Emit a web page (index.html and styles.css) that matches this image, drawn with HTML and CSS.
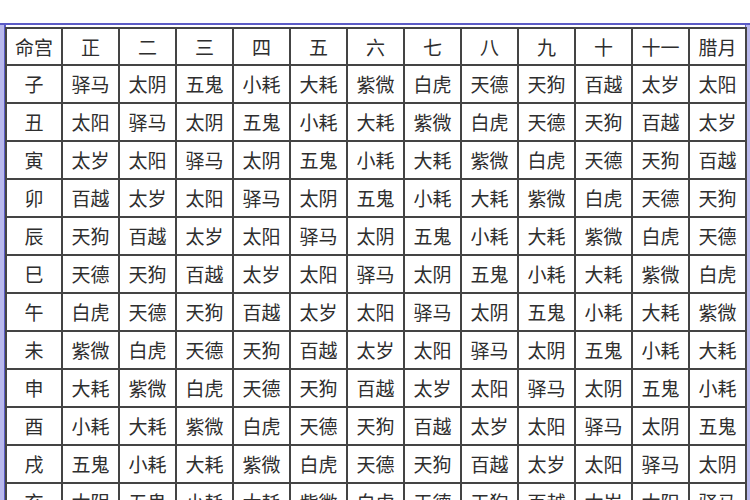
FILE: index.html
```html
<!DOCTYPE html>
<html lang="zh">
<head>
<meta charset="utf-8">
<title>命宫表</title>
<link rel="stylesheet" href="styles.css">
</head>
<body>
<div class="frame">
  <div class="inner">
    <table class="grid">
      <colgroup>
        <col class="c-first"><col><col><col><col><col><col><col><col><col><col><col><col>
      </colgroup>
      <tr class="head"><td>命宫</td><td>正</td><td>二</td><td>三</td><td>四</td><td>五</td><td>六</td><td>七</td><td>八</td><td>九</td><td>十</td><td>十一</td><td>腊月</td></tr>
      <tr><td>子</td><td>驿马</td><td>太阴</td><td>五鬼</td><td>小耗</td><td>大耗</td><td>紫微</td><td>白虎</td><td>天德</td><td>天狗</td><td>百越</td><td>太岁</td><td>太阳</td></tr>
      <tr><td>丑</td><td>太阳</td><td>驿马</td><td>太阴</td><td>五鬼</td><td>小耗</td><td>大耗</td><td>紫微</td><td>白虎</td><td>天德</td><td>天狗</td><td>百越</td><td>太岁</td></tr>
      <tr><td>寅</td><td>太岁</td><td>太阳</td><td>驿马</td><td>太阴</td><td>五鬼</td><td>小耗</td><td>大耗</td><td>紫微</td><td>白虎</td><td>天德</td><td>天狗</td><td>百越</td></tr>
      <tr><td>卯</td><td>百越</td><td>太岁</td><td>太阳</td><td>驿马</td><td>太阴</td><td>五鬼</td><td>小耗</td><td>大耗</td><td>紫微</td><td>白虎</td><td>天德</td><td>天狗</td></tr>
      <tr><td>辰</td><td>天狗</td><td>百越</td><td>太岁</td><td>太阳</td><td>驿马</td><td>太阴</td><td>五鬼</td><td>小耗</td><td>大耗</td><td>紫微</td><td>白虎</td><td>天德</td></tr>
      <tr><td>巳</td><td>天德</td><td>天狗</td><td>百越</td><td>太岁</td><td>太阳</td><td>驿马</td><td>太阴</td><td>五鬼</td><td>小耗</td><td>大耗</td><td>紫微</td><td>白虎</td></tr>
      <tr><td>午</td><td>白虎</td><td>天德</td><td>天狗</td><td>百越</td><td>太岁</td><td>太阳</td><td>驿马</td><td>太阴</td><td>五鬼</td><td>小耗</td><td>大耗</td><td>紫微</td></tr>
      <tr><td>未</td><td>紫微</td><td>白虎</td><td>天德</td><td>天狗</td><td>百越</td><td>太岁</td><td>太阳</td><td>驿马</td><td>太阴</td><td>五鬼</td><td>小耗</td><td>大耗</td></tr>
      <tr><td>申</td><td>大耗</td><td>紫微</td><td>白虎</td><td>天德</td><td>天狗</td><td>百越</td><td>太岁</td><td>太阳</td><td>驿马</td><td>太阴</td><td>五鬼</td><td>小耗</td></tr>
      <tr><td>酉</td><td>小耗</td><td>大耗</td><td>紫微</td><td>白虎</td><td>天德</td><td>天狗</td><td>百越</td><td>太岁</td><td>太阳</td><td>驿马</td><td>太阴</td><td>五鬼</td></tr>
      <tr><td>戌</td><td>五鬼</td><td>小耗</td><td>大耗</td><td>紫微</td><td>白虎</td><td>天德</td><td>天狗</td><td>百越</td><td>太岁</td><td>太阳</td><td>驿马</td><td>太阴</td></tr>
      <tr><td>亥</td><td>太阴</td><td>五鬼</td><td>小耗</td><td>大耗</td><td>紫微</td><td>白虎</td><td>天德</td><td>天狗</td><td>百越</td><td>太岁</td><td>太阳</td><td>驿马</td></tr>
    </table>
  </div>
</div>
</body>
</html>
```
FILE: styles.css
```css
html, body {
  margin: 0;
  padding: 0;
  background: #ffffff;
  overflow: hidden;
}
body {
  width: 750px;
  height: 500px;
  font-family: "Noto Sans CJK SC", "Noto Sans", sans-serif;
}
.frame {
  margin-top: 23px;
  border-top: 2px solid #5b5bc6;
  background: #b9b9ec;
  padding: 0 4px 0 4px;
  height: 600px;
}
.inner {
  background: #ffffff;
  border-left: 2px solid #5b5bc6;
  border-right: 1px solid #6a6acc;
  padding-top: 2px;
  height: 100%;
}
.grid {
  border-collapse: collapse;
  table-layout: fixed;
  width: 740px;
  margin-left: -1px;
}
.grid col { width: 57px; }
.grid col.c-first { width: 56px; }
.grid td {
  border: 2px solid #444444;
  height: 36px;
  padding: 0;
  text-align: center;
  vertical-align: middle;
  font-size: 19px;
  line-height: 22px;
  color: #2e2e2e;
  white-space: nowrap;
}
.grid tr.head td { height: 35px; }
```
